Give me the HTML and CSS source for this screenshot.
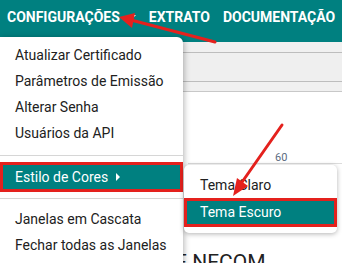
FILE: index.html
```html
<!DOCTYPE html>
<html lang="pt">
<head>
    <meta charset="UTF-8">
    <meta name="viewport" content="width=device-width, initial-scale=1.0">
    <title>Configurações</title>
    <link rel="stylesheet" href="styles.css">
</head>
<body>
    <div class="topbar">
        <span class="nav-item">CONFIGURAÇÕES<i class="caret"></i></span>
        <span class="nav-item extrato">EXTRATO</span>
        <span class="nav-item docs">DOCUMENTAÇÃO</span>
    </div>
    <div class="toolbar"></div>
    <div class="tabs"></div>
    <div class="subtabs"></div>
    <div class="content">
        <div class="chart">
            <span class="tick">60</span>
        </div>
        <h2 class="title">E NECOM</h2>
    </div>

    <div class="menu">
        <div class="menu-item">Atualizar Certificado</div>
        <div class="menu-item">Parâmetros de Emissão</div>
        <div class="menu-item">Alterar Senha</div>
        <div class="menu-item">Usuários da API</div>
        <div class="divider"></div>
        <div class="menu-item active">Estilo de Cores <i class="arrow-right"></i></div>
        <div class="divider"></div>
        <div class="menu-item">Janelas em Cascata</div>
        <div class="menu-item">Fechar todas as Janelas</div>
    </div>

    <div class="submenu">
        <div class="menu-item">Tema Claro</div>
        <div class="menu-item active">Tema Escuro</div>
    </div>

    <svg class="marks" width="342" height="263" viewBox="0 0 342 263">
        <line x1="215" y1="42" x2="131" y2="20" stroke="#e4211d" stroke-width="3" stroke-linecap="round"/>
        <polygon points="119,17 135,13 132,28" fill="#e4211d"/>
        <line x1="282" y1="125" x2="240" y2="185" stroke="#e4211d" stroke-width="3" stroke-linecap="round"/>
        <polygon points="233,196 248,186 237,178" fill="#e4211d"/>
    </svg>
</body>
</html>
```

FILE: styles.css
```css
body {
    margin: 0;
    padding: 0;
    font-family: Roboto, "Liberation Sans", sans-serif;
    background-color: #fff;
    color: #212121;
    width: 342px;
    height: 263px;
    overflow: hidden;
    position: relative;
}

.topbar {
    height: 42px;
    background-color: #008080;
    display: flex;
    padding: 9px 0 0 7px;
    box-sizing: border-box;
    white-space: nowrap;
}

.nav-item {
    color: #fff;
    font-weight: bold;
    font-size: 14px;
    line-height: 16px;
}

.extrato {
    margin-left: 13px;
}

.docs {
    margin-left: 13px;
}

.caret {
    display: inline-block;
    width: 0;
    height: 0;
    margin-left: 8px;
    vertical-align: 3px;
    border-left: 4px solid transparent;
    border-right: 4px solid transparent;
    border-top: 4px solid #fff;
}

.toolbar {
    height: 10px;
    background-color: #f0f0f0;
    border-bottom: 1px solid #bdbdbd;
}

.tabs {
    height: 28px;
    background-color: #efefef;
    border-bottom: 1px solid #bdbdbd;
}

.subtabs {
    height: 9px;
    background-color: #f0f0f0;
    border-bottom: 1px solid #c8c8c8;
}

.content {
    padding-left: 175px;
}

.chart {
    margin-top: 60px;
    margin-left: 13px;
    height: 11px;
    border-bottom: 1px solid #dcdcdc;
}

.tick {
    display: block;
    margin-left: 87px;
    font-size: 11px;
    line-height: 11px;
    color: #5c6b80;
}

.title {
    margin: 86px 0 0;
    font-size: 21px;
    font-weight: normal;
    color: #222;
    line-height: 24px;
    white-space: nowrap;
}

.menu {
    position: absolute;
    left: 0;
    top: 37px;
    width: 183px;
    height: 240px;
    background-color: #fff;
    border-radius: 0 6px 0 0;
    box-shadow: 1px 1px 6px rgba(0, 0, 0, 0.3);
    padding-top: 5px;
    box-sizing: border-box;
}

.menu-item {
    height: 26px;
    line-height: 26px;
    padding-left: 15px;
    font-size: 14px;
    white-space: nowrap;
}

.menu-item.active {
    height: 30px;
    line-height: 24px;
    box-sizing: border-box;
    background-color: #008080;
    color: #fff;
    border: 3px solid #e4211d;
    padding-left: 12px;
}

.divider {
    height: 1px;
    background-color: #d6d6d6;
    margin: 9px 0 6px;
}

.divider + .menu-item.active + .divider {
    margin: 6px 0 7px;
}

.arrow-right {
    display: inline-block;
    width: 0;
    height: 0;
    margin-left: 4px;
    vertical-align: 1px;
    border-top: 4px solid transparent;
    border-bottom: 4px solid transparent;
    border-left: 4px solid #fff;
}

.submenu {
    position: absolute;
    left: 184px;
    top: 165px;
    width: 153px;
    height: 68px;
    background-color: #fff;
    border-radius: 5px;
    box-shadow: 0 1px 5px rgba(0, 0, 0, 0.3);
    padding-top: 8px;
    box-sizing: border-box;
}

.submenu .menu-item {
    height: 25px;
    line-height: 25px;
    padding-left: 16px;
}

.submenu .menu-item.active {
    height: 29px;
    line-height: 23px;
    padding-left: 13px;
}

.marks {
    position: absolute;
    left: 0;
    top: 0;
}
```
